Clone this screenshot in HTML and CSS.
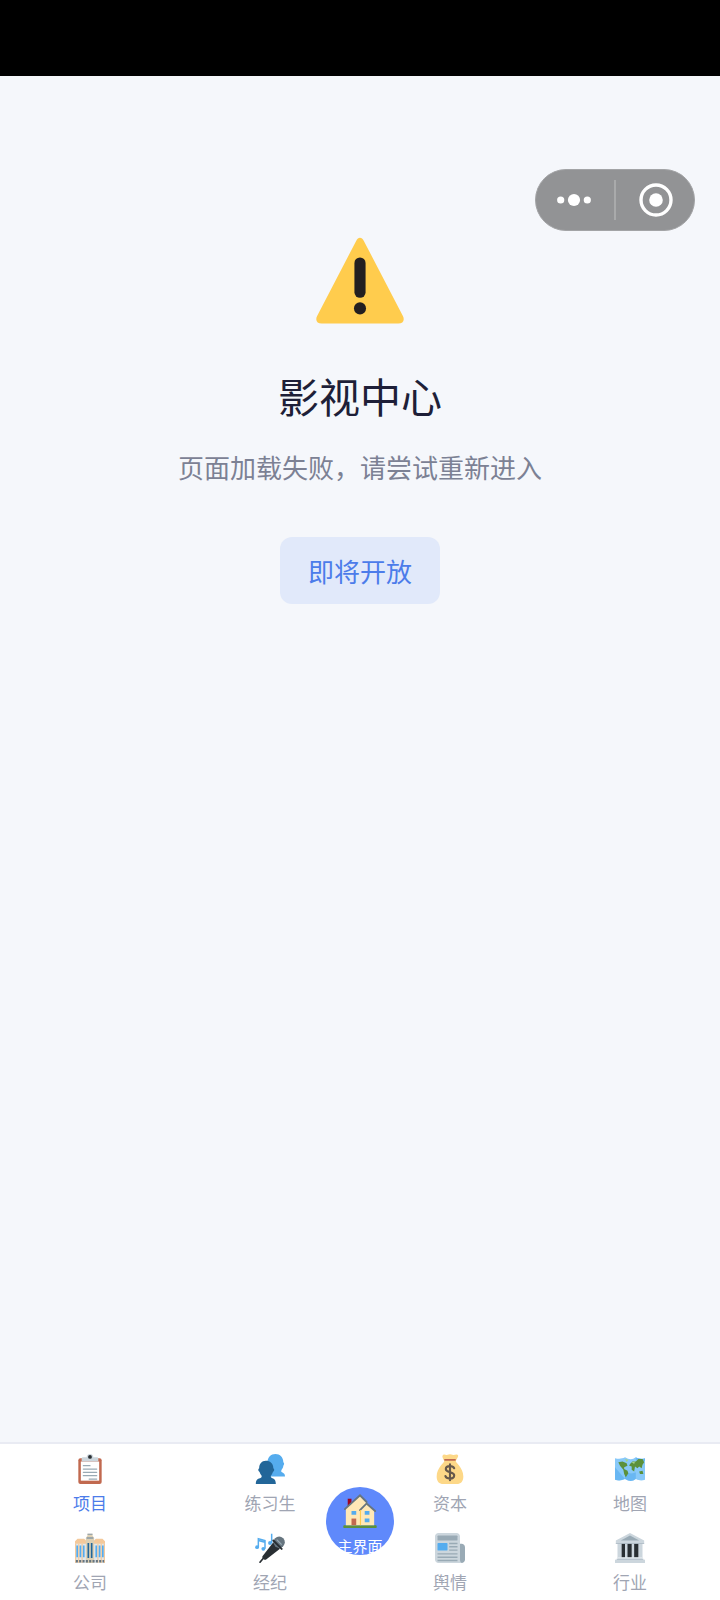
FILE: index.html
```html
<!DOCTYPE html>
<html lang="zh-CN">
<head>
  <meta charset="UTF-8">
  <meta name="viewport" content="width=device-width, initial-scale=1.0">
  <title>影视中心</title>
  <link rel="stylesheet" href="styles.css">
</head>
<body>

  <header class="status-bar"></header>

  <div class="capsule">
    <button class="capsule-btn more" aria-label="更多">
      <svg width="36" height="14" viewBox="0 0 36 14" fill="#fff">
        <circle cx="4.700" cy="7" r="3.600"/>
        <circle cx="18" cy="7" r="6.100"/>
        <circle cx="31.300" cy="7" r="3.600"/>
      </svg>
    </button>
    <span class="capsule-line"></span>
    <button class="capsule-btn close" aria-label="关闭">
      <svg width="34" height="34" viewBox="0 0 34 34">
        <circle cx="17" cy="17" r="15" fill="none" stroke="#fff" stroke-width="3.400"/>
        <circle cx="17" cy="17" r="6.800" fill="#fff"/>
      </svg>
    </button>
  </div>

  <main class="content">
    <svg class="warning" viewBox="0 0 36 36">
      <path fill="#FFCC4D" d="M2.653 35C.811 35-.001 33.662.847 32.027L16.456 1.972c.849-1.635 2.238-1.635 3.087 0l15.609 30.056c.85 1.634.037 2.972-1.805 2.972H2.653z"/>
      <rect x="15.770" y="8.550" width="4.460" height="16.150" rx="2.200" fill="#231F20"/>
      <circle cx="18" cy="28.950" r="2.420" fill="#231F20"/>
    </svg>
    <h1 class="title">影视中心</h1>
    <p class="message">页面加载失败，请尝试重新进入</p>
    <button class="soon-btn">即将开放</button>
  </main>

  <nav class="tabbar">
    <a class="tab active" href="#">
      <!-- clipboard -->
      <svg class="icon" viewBox="0 0 36 36">
        <rect x="4" y="5" width="28" height="31" rx="2.500" fill="#C1694F"/>
        <path fill="#fff" d="M7 9h22v23H7z"/>
        <path fill="#CCD6DD" d="M9 9c-1 0-1-1-1-1.500V6c0-1.500 1-2 2-2h4c0-2.500 1.500-4 4-4s4 1.500 4 4h4c1 0 2 .5 2 2v1.500c0 .5 0 1.500-1 1.500z"/>
        <circle cx="18" cy="3.500" r="2.300" fill="#292F33"/>
        <path stroke="#99AAB5" stroke-width="1.500" stroke-linecap="round" d="M10 14h8M10 18h16M10 22h16M10 26h16M17 30h9"/>
      </svg>
      <span class="label">项目</span>
    </a>
    <a class="tab" href="#">
      <!-- two people -->
      <svg class="icon" viewBox="0 0 36 36">
        <path fill="#55ACEE" d="M15 27V14c-1-1-1.500-3 0-4 0-6 4-10 9.500-10S34 4 34 10c1.500 1 1 3 0 4 0 3-2 4-2.500 6 0 1 0 1.500 1 2 2 1 3.500 2 3.500 5z"/>
        <path fill="#226699" d="M1 36c0-4 1-6 5-7 2-1 2-1 2-3-1-1-2-3-2.500-4.500-2-1-2-4-.5-4.500 0-5 3-9 8-9s9 3 9 9c1.500.5 1.500 3.500-.5 4.500C21 23 20 25 19 26c0 2 0 2 2 3 3 1 4 3 4 7z"/>
      </svg>
      <span class="label">练习生</span>
    </a>
    <a class="tab" href="#">
      <!-- money bag -->
      <svg class="icon" viewBox="0 0 36 36">
        <path fill="#FDD888" d="M11 8C9 5 8 2 10 1c2-1 3 1 5 0s4-1 6 0 4-1 6 0 0 4-2 7c-1 2 9 8 9 19 0 6-3 9-8 9H10c-5 0-8-3-8-9C2 16 12 10 11 8z"/>
        <path stroke="#BF6952" stroke-width="2.200" stroke-linecap="round" d="M12 7h12"/>
        <path fill="none" stroke="#67594B" stroke-width="2.600" stroke-linecap="round" d="M23 17c-1-2-3-2.500-5-2.500-3 0-5 1-5 3.500 0 5 10 3 10 7.500 0 3-2 4-5 4s-5-1-5.500-3M18 12.500v19"/>
      </svg>
      <span class="label">资本</span>
    </a>
    <a class="tab" href="#">
      <!-- world map -->
      <svg class="icon" viewBox="0 0 36 36">
        <path fill="#88C9F9" d="M0 5c4 1 8 1 12-1 5 3 9 3 13 0 4 2 7 2 11 1v26c-4 1-7 1-11-1-4 3-8 3-13 0-4 2-8 2-12 1z"/>
        <path fill="#55ACEE" d="M0 31V16l12 14c-4 2-8 2-12 1zM12 20c4 4 9 4 13 2v8c-4 3-8 3-13 0zM25 4c4 2 7 2 11 1v3c-4 1-7 1-11-1z" opacity=".6"/>
        <path fill="#5C913B" d="M4 10l5-1 5 2 1 3-4 2 0 2 4 2 1 3-3 5-2-4-1-5-4-5zM18 12l3-3 4 0 3-3 5 0 2 4-2 3-1 4-3-2-2 2-3-2-1 6-3-2 0-4-3-1zM29 21l4-1 1 4-4 0z"/>
        <path fill="#A6D388" d="M20 10l4-1-1 3zM12 6l4 1-2 3z"/>
      </svg>
      <span class="label">地图</span>
    </a>
    <a class="tab" href="#">
      <!-- office towers -->
      <svg class="icon" viewBox="0 0 36 36">
        <path fill="#E1E8ED" d="M0 11h36v25H0z"/>
        <path fill="#F4C99B" d="M0 13v-3l3-3h8l3 3v3zM22 13v-3l3-3h8l3 3v3z"/>
        <path fill="#DDD0B4" d="M13 36V6l2-3V1h6v2l2 3v30z"/>
        <path fill="#8899A6" d="M14 5h8v2h-8zM15 1h6v1h-6z"/>
        <path stroke="#F4C99B" stroke-width="1.500" d="M.8 13v23M4.500 13v23M8.500 13v23M27.500 13v23M31.500 13v23M35.200 13v23"/>
        <path stroke="#55ACEE" stroke-width="2" d="M2.600 15v14M6.500 15v14M10.500 15v14M25.500 15v14M29.500 15v14M33.400 15v14"/>
        <path stroke="#226699" stroke-width="2" d="M16 12v18M20 12v18"/>
        <path stroke="#66757F" stroke-width="3" stroke-dasharray="2.500 1.500" d="M1 34h34"/>
      </svg>
      <span class="label">公司</span>
    </a>
    <a class="tab" href="#">
      <!-- notes and microphone -->
      <svg class="icon" viewBox="0 0 36 36">
        <path fill="none" stroke="#55ACEE" stroke-width="1.800" d="M4 17V7l8 2v10M4 9l8 2M20 12V1"/>
        <g fill="#55ACEE"><circle cx="2.500" cy="17" r="2.300"/><circle cx="10" cy="19" r="2.300"/><circle cx="18" cy="12" r="2.300"/></g>
        <path stroke="#292F33" stroke-width="2" stroke-linecap="round" d="M11 29l-5 6"/>
        <path fill="#292F33" d="M9 28L22 11l8 8-17 13c-2 1-5-2-4-4z"/>
        <circle cx="29" cy="11" r="6.800" fill="#66757F"/>
        <path fill="none" stroke="#292F33" stroke-width="2.400" stroke-linecap="round" d="M22 9l10 10"/>
        <path fill="none" stroke="#99AAB5" stroke-width="1.500" d="M26 8l6 6"/>
      </svg>
      <span class="label">经纪</span>
    </a>
    <a class="tab" href="#">
      <!-- newspaper -->
      <svg class="icon" viewBox="0 0 36 36">
        <path fill="#99AAB5" d="M27 13h5c2 0 4 2 4 4v15c0 2-2 4-4 4h-5z"/>
        <path fill="#CCD6DD" d="M4 0h22c2 0 4 2 4 4v28c0 2 1 4 3 4H4c-2 0-4-2-4-4V4c0-2 2-4 4-4z"/>
        <rect x="3" y="3" width="24" height="6" rx="1" fill="#99AAB5"/>
        <rect x="3" y="12" width="12" height="9" rx="1" fill="#55ACEE"/>
        <path stroke="#99AAB5" stroke-width="1.700" d="M17 12.500h10M17 16.500h10M17 20.500h10M3 25h24M3 29h24M3 33h24"/>
      </svg>
      <span class="label">舆情</span>
    </a>
    <a class="tab" href="#">
      <!-- classical building -->
      <svg class="icon" viewBox="0 0 36 36">
        <path fill="#292F33" d="M5 12h26v18H5z"/>
        <path fill="#CCD6DD" d="M18 0l17 9v4H1V9zM3 12h5v18H3zM12 12h3v18h-3zM20 12h3v18h-3zM28 12h5v18h-5z"/>
        <path fill="#99AAB5" d="M18 3l11 6H7z"/>
        <path fill="#E1E8ED" d="M3 29h30v3H3z"/>
        <path fill="#CCD6DD" d="M0 32h36v4H0z"/>
        <path fill="#AAB8C2" d="M1 12h34v1H1zM2 31h32v1H2z"/>
      </svg>
      <span class="label">行业</span>
    </a>

    <a class="home" href="#">
      <svg class="home-icon" viewBox="0 0 36 36">
        <path fill="#5C913B" d="M1 33h34c1 0 1 3 0 3H1c-1 0-1-3 0-3z"/>
        <path fill="#A0041E" d="M5 5h4v11H5z"/>
        <path fill="#FFE8B6" d="M3 15L18 2l8 8 7 7v16H3z"/>
        <path fill="none" stroke="#66757F" stroke-width="2" stroke-linecap="round" d="M2 16L18 1.500l7 7M18 17l7-7 9 8"/>
        <path stroke="#FFCC4D" stroke-width="1.200" d="M18.500 17v16"/>
        <path fill="#C1694F" d="M9 26h5v7H9z"/>
        <path fill="#55ACEE" d="M9 18h5v4H9zM23 18h5v4h-5zM23 26h5v4h-5z"/>
      </svg>
      <span class="home-label">主界面</span>
    </a>
  </nav>

</body>
</html>
```
FILE: styles.css
```css
* {
  box-sizing: border-box;
}
body {
  margin: 0;
  min-height: 100vh;
  display: flex;
  flex-direction: column;
  background-color: #f5f7fb;
  font-family: "Noto Sans CJK SC", sans-serif;
  position: relative;
}
button {
  border: none;
  font-family: inherit;
  cursor: pointer;
}
a {
  text-decoration: none;
}
.status-bar {
  height: 76px;
  background-color: #000;
}

/* floating capsule at the top right */
.capsule {
  position: absolute;
  top: 169px;
  right: 25px;
  width: 160px;
  height: 62px;
  display: flex;
  align-items: center;
  border: 1px solid #a3a4a6;
  border-radius: 31px;
  background-color: #929395;
}
.capsule-btn {
  flex: 1;
  height: 100%;
  padding: 0;
  display: flex;
  align-items: center;
  justify-content: center;
  background: none;
}
.capsule-btn.more {
  padding-right: 2px;
}
.capsule-btn.close {
  padding-left: 2px;
}
.capsule-line {
  width: 2px;
  height: 40px;
  background-color: #a9aaab;
}

.content {
  flex: 1;
  display: flex;
  flex-direction: column;
  align-items: center;
  padding: 160px 24px 24px;
}
.warning {
  width: 90px;
  height: 90px;
}
.title {
  margin: 39px 0 24px;
  font-size: 41px;
  line-height: 60px;
  font-weight: 400;
  color: #1e1f38;
}
.message {
  margin: 0 0 52px;
  font-size: 26px;
  line-height: 36px;
  color: #7c8194;
}
.soon-btn {
  padding: 15px 28px;
  border-radius: 12px;
  background-color: #e1e9fa;
  color: #4c7cea;
  font-size: 26px;
  line-height: 37px;
}

/* bottom tabs */
.tabbar {
  position: relative;
  display: grid;
  grid-template-columns: repeat(4, 1fr);
  row-gap: 18px;
  padding: 10px 0 6px;
  border-top: 2px solid #e9ebf3;
  background-color: #fff;
}
.tab {
  display: flex;
  flex-direction: column;
  align-items: center;
  gap: 7px;
  color: #a0a5b3;
}
.tab.active {
  color: #4c7cea;
}
.icon {
  width: 30px;
  height: 30px;
}
.label {
  font-size: 17px;
  line-height: 24px;
}
.home {
  position: absolute;
  top: 43px;
  left: 50%;
  margin-left: -34px;
  width: 68px;
  height: 68px;
  padding-top: 7px;
  display: flex;
  flex-direction: column;
  align-items: center;
  gap: 8px;
  border-radius: 50%;
  background-color: #5f89fb;
  color: #fff;
}
.home-icon {
  width: 34px;
  height: 34px;
  flex-shrink: 0;
}
.home-label {
  font-size: 15px;
  line-height: 20px;
  white-space: nowrap;
}
```
